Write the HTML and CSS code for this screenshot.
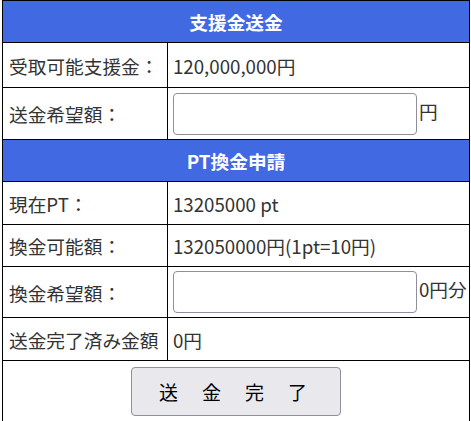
FILE: index.html
```html
<!DOCTYPE html>
<html lang="ja">
<head>
    <meta charset="UTF-8"/>
    <meta name="viewport" content="width=device-width,initial-scale=1"/>
    <title>支援金送金</title>
    <link rel="stylesheet" href="styles.css">
</head>
<body>
<form id="sendForm">
<table class="panel">
    <colgroup><col class="col-label"><col class="col-value"></colgroup>
    <tr class="head"><th colspan="2">支援金送金</th></tr>
    <tr class="r45">
        <td class="label">受取可能支援金：</td>
        <td class="value">120,000,000円</td>
    </tr>
    <tr class="r52">
        <td class="label">送金希望額：</td>
        <td class="value"><input type="text" id="amount" class="field">円</td>
    </tr>
    <tr class="head"><th colspan="2">PT換金申請</th></tr>
    <tr class="r43">
        <td class="label">現在PT：</td>
        <td class="value">13205000 pt</td>
    </tr>
    <tr class="r42">
        <td class="label">換金可能額：</td>
        <td class="value">132050000円(1pt=10円)</td>
    </tr>
    <tr class="r51">
        <td class="label">換金希望額：</td>
        <td class="value"><input type="text" id="pt" class="field">0円分</td>
    </tr>
    <tr class="r43">
        <td class="label">送金完了済み金額</td>
        <td class="value">0円</td>
    </tr>
    <tr class="last">
        <td colspan="2" class="submit"><button type="submit">送金完了</button></td>
    </tr>
</table>
</form>
</body>
</html>
```

FILE: styles.css
```css
body { margin: 0; font-family: "Noto Sans CJK JP", "Noto Sans", sans-serif; font-size: 18.7px; color: #333; }
.panel { border-collapse: collapse; margin-left: 2px; width: 468px; table-layout: fixed; }
.col-label { width: 165px; }
.panel td, .panel th { border: 1px solid #000; padding: 0 6px; vertical-align: middle; }
.panel .label { white-space: nowrap; }
.panel .value { padding-left: 5px; white-space: nowrap; }
.head th { background: #4169e1; color: #fff; font-weight: bold; height: 41px; padding: 0; }
.r45 td { height: 44px; }
.r52 td { height: 51px; }
.r43 td { height: 42px; }
.r42 td { height: 41px; }
.r51 td { height: 50px; }
.last td { height: 62px; vertical-align: top; }
.field { width: 244px; height: 42px; box-sizing: border-box; border: 1px solid #8f8f9d; border-radius: 4px; vertical-align: middle; margin: 0 2px 0 0; font-size: 16px; }
.panel .submit { text-align: center; padding-top: 6px; }
.submit button { width: 210px; height: 49px; background: #e9e9ed; border: 1px solid #8f8f9d; border-radius: 4px; font-family: inherit; font-size: 19px; letter-spacing: 24px; padding-left: 24px; color: #000; }
```
